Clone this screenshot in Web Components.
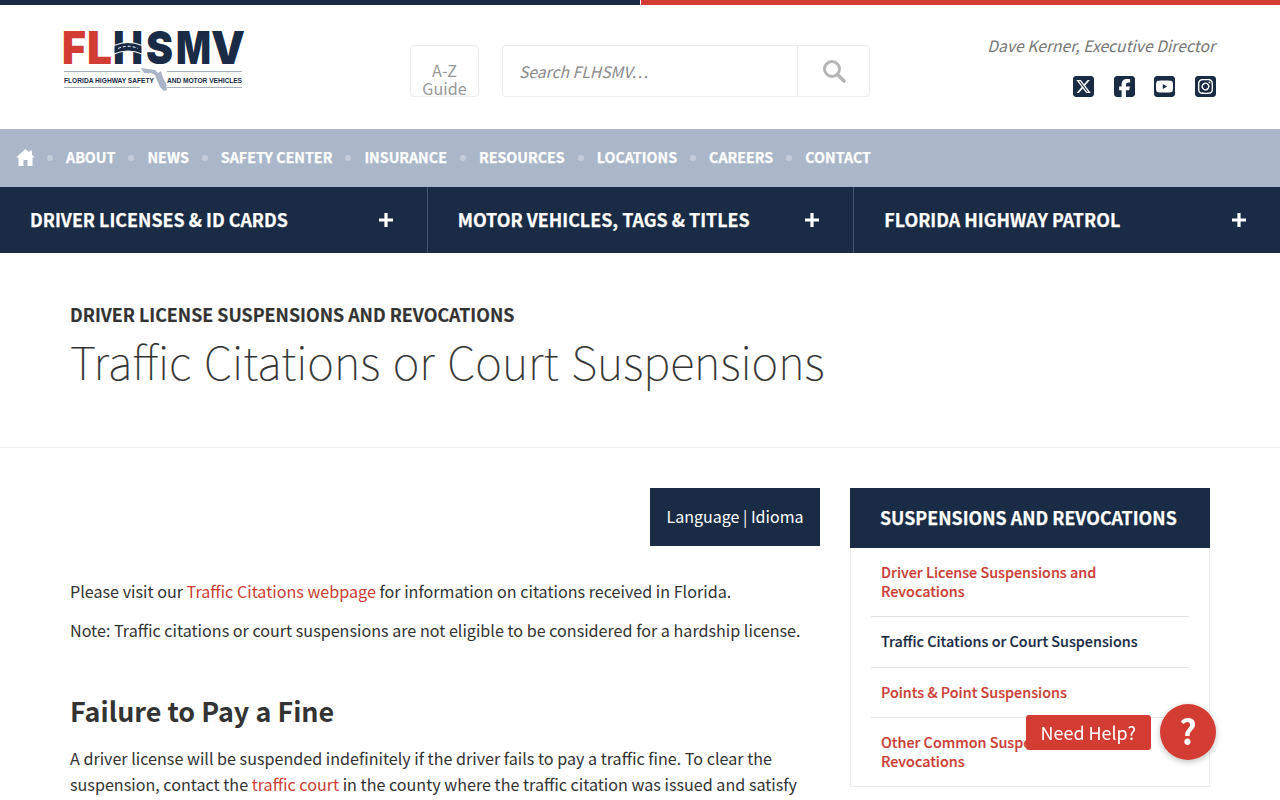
<!DOCTYPE html>
<html lang="en">
<head>
<meta charset="utf-8">
<title>Traffic Citations or Court Suspensions</title>
<style>
  html, body { margin: 0; padding: 0; background: #fff; }
  body { font-family: "Noto Sans CJK SC", "Open Sans", sans-serif; color: #333; overflow: hidden; height: 800px; }
</style>
</head>
<body>
<site-header></site-header>
<utility-nav></utility-nav>
<main-nav></main-nav>
<page-title kicker="Driver License Suspensions and Revocations">Traffic Citations or Court Suspensions</page-title>
<page-body>
  <article-content></article-content>
  <side-menu slot="side"></side-menu>
</page-body>
<help-button></help-button>

<script>
const fontStack = `"Noto Sans CJK SC", "Open Sans", sans-serif`

customElements.define('site-logo', class extends HTMLElement {
  connectedCallback() {
    const shadow = this.attachShadow({mode: 'open'})
    const letter = (t, x, w, fill) => `<text x="${x}" y="34" font-size="46" fill="${fill}" textLength="${w}" lengthAdjust="spacingAndGlyphs">${t}</text>`
    shadow.innerHTML = `
    <style>
      :host{ display: block; width: 182px; height: 64px; }
      svg{ display: block; overflow: visible; }
      text{ font-family: Inter, "Liberation Sans", sans-serif; font-weight: 900; }
      .sm{ font-family: "Liberation Sans", sans-serif; font-weight: 700; }
    </style>
    <svg width="182" height="64" viewBox="0 0 182 64">
      ${letter('F', -2, 24, '#d33c32')}
      ${letter('L', 23, 25, '#d33c32')}
      ${letter('H', 49, 30, '#1a2b45')}
      ${letter('S', 82, 27, '#1a2b45')}
      ${letter('M', 112, 35, '#1a2b45')}
      ${letter('V', 147, 34, '#1a2b45')}
      <path d="M50 15.500 Q64 9.500 78 15.500 V24 Q64 18 50 24 Z" fill="#1a2b45" stroke="#fff" stroke-width="1"/>
      <path d="M54 18.500 Q64 14 74 18.500" fill="none" stroke="#fff" stroke-width="1" stroke-dasharray="3 2"/>
      <rect x="0" y="41" width="76" height="1" fill="#a9b0bb"/>
      <rect x="103" y="41" width="75" height="1" fill="#a9b0bb"/>
      <rect x="0" y="57" width="76" height="1" fill="#a9b0bb"/>
      <rect x="103" y="57" width="75" height="1" fill="#a9b0bb"/>
      <path d="M77 38 L91 40 L94 43 L97 41 L99 48 L102 53 L103 60 L100 61 L96 57 L93 50 L91 45 L87 43 L80 43 Z" fill="#a9b4c6"/>
      <text class="sm" x="0" y="52.500" font-size="6.600" fill="#1a2b45" textLength="90" lengthAdjust="spacing">FLORIDA HIGHWAY SAFETY</text>
      <text class="sm" x="103" y="52.500" font-size="6.600" fill="#1a2b45" textLength="75" lengthAdjust="spacing">AND MOTOR VEHICLES</text>
    </svg>`
  }
})

customElements.define('social-links', class extends HTMLElement {
  connectedCallback() {
    const shadow = this.attachShadow({mode: 'open'})
    const icons = {
      X: 'M64 32C28.700 32 0 60.700 0 96V416c0 35.300 28.700 64 64 64H384c35.300 0 64-28.700 64-64V96c0-35.300-28.700-64-64-64H64zm297.100 84L257.300 234.600 379.400 396H283.800L209 298.100 123.300 396H75.800l111-126.900L69.700 116h98l67.700 89.500L313.600 116h47.500zM323.300 367.600L153.400 142.900H125.100L296.900 367.600h26.300z',
      Facebook: 'M64 32C28.700 32 0 60.700 0 96V416c0 35.300 28.700 64 64 64h98.200V334.200H109.400V256h52.800V222.300c0-87.100 39.400-127.400 125-127.400c16.200 0 44.200 3.200 55.700 6.400V172c-6-.6-16.500-1-29.600-1c-42 0-58.200 15.900-58.200 57.200V256h83.600l-14.400 78.200H255V480H384c35.300 0 64-28.700 64-64V96c0-35.300-28.700-64-64-64H64z',
      YouTube: 'M282 256.200l-95.200-54.100V310.300L282 256.200zM384 32H64C28.700 32 0 60.700 0 96V416c0 35.300 28.700 64 64 64H384c35.300 0 64-28.700 64-64V96c0-35.300-28.700-64-64-64zm14.400 136.100c7.600 28.600 7.600 88.200 7.600 88.200s0 59.600-7.600 88.100c-4.200 15.800-16.500 27.700-32.200 31.900C337.900 384 224 384 224 384s-113.900 0-142.200-7.600c-15.700-4.200-28-16.100-32.200-31.900C42 315.900 42 256.300 42 256.300s0-59.700 7.600-88.200c4.200-15.800 16.500-28.200 32.200-32.400C110.100 128 224 128 224 128s113.900 0 142.200 7.700c15.700 4.200 28 16.600 32.200 32.400z',
      Instagram: 'M194.400 211.700a53.300 53.300 0 1 0 59.300 88.700 53.300 53.300 0 1 0 -59.300-88.700zm142.300-68.400c-5.200-5.200-11.500-9.300-18.400-12c-18.100-7.100-57.600-6.800-83.100-6.500c-4.100 0-7.900 .1-11.200 .1c-3.300 0-7.200 0-11.400-.1c-25.500-.3-64.800-.7-82.900 6.500c-6.900 2.700-13.100 6.800-18.400 12s-9.300 11.500-12 18.400c-7.100 18.100-6.700 57.700-6.500 83.200c0 4.100 .1 7.900 .1 11.100s0 7-.1 11.100c-.2 25.500-.6 65.100 6.500 83.200c2.700 6.900 6.800 13.100 12 18.400s11.500 9.300 18.400 12c18.100 7.100 57.600 6.800 83.100 6.500c4.100 0 7.900-.1 11.200-.1c3.300 0 7.200 0 11.400 .1c25.500 .3 64.800 .7 82.900-6.500c6.900-2.700 13.100-6.800 18.400-12s9.300-11.500 12-18.400c7.200-18 6.800-57.400 6.500-83c0-4.200-.1-8.100-.1-11.400s0-7.100 .1-11.400c.3-25.500 .7-64.900-6.500-83l0 0c-2.700-6.900-6.800-13.100-12-18.400zm-67.100 44.500A82 82 0 1 1 178.400 324.200a82 82 0 1 1 91.100-136.400zm29.200-1.300c-3.100-2.100-5.600-5.100-7.100-8.600s-1.800-7.300-1.100-11.100s2.600-7.100 5.200-9.800s6.100-4.500 9.800-5.200s7.600-.4 11.100 1.100s6.500 3.900 8.600 7s3.200 6.800 3.200 10.600c0 2.500-.5 5-1.400 7.300s-2.400 4.400-4.100 6.200s-3.900 3.200-6.200 4.200s-4.800 1.500-7.300 1.500l0 0c-3.800 0-7.500-1.100-10.600-3.200zM448 96c0-35.300-28.700-64-64-64H64C28.700 32 0 60.700 0 96V416c0 35.300 28.700 64 64 64H384c35.300 0 64-28.700 64-64V96zM357 389c-18.700 18.700-41.400 24.600-67 25.900c-26.400 1.500-105.600 1.500-132 0c-25.600-1.300-48.300-7.200-67-25.900s-24.600-41.400-25.800-67c-1.500-26.400-1.500-105.600 0-132c1.300-25.600 7.100-48.300 25.800-67s41.500-24.600 67-25.800c26.400-1.500 105.600-1.500 132 0c25.600 1.300 48.300 7.200 67 25.800s24.600 41.400 25.800 67c1.500 26.300 1.500 105.400 0 131.900c-1.300 25.600-7.100 48.300-25.800 67z'
    }
    shadow.innerHTML = `
    <style>
      :host{ display: flex; gap: 19.670px; }
      a{ display: block; width: 21px; height: 21px; }
      svg{ display: block; width: 21px; height: 21px; fill: #1a2b45; }
    </style>
    ${Object.keys(icons).map(k => `<a href="#" aria-label="${k}"><svg viewBox="0 32 448 448"><path d="${icons[k]}"/></svg></a>`).join('')}`
  }
})

customElements.define('site-header', class extends HTMLElement {
  connectedCallback() {
    const shadow = this.attachShadow({mode: 'open'})
    shadow.innerHTML = `
    <style>
      :host{ display: block; height: 129px; font-family: ${fontStack}; }
      .bar{ height: 5px; background: linear-gradient(to right, #1a2b45 640px, #fff 640px, #fff 641px, #d33c32 641px); }
      .row{ display: flex; align-items: flex-start; padding: 25px 64px 0 64px; }
      site-logo{ flex: none; }
      .az{ flex: none; box-sizing: border-box; width: 69px; height: 52px; margin: 15px 0 0 164px; border: 1px solid #ececec; border-radius: 4px; color: #999; font-size: 16.140px; line-height: 18px; text-align: center; padding-top: 15px; overflow: hidden; text-decoration: none; }
      .search{ flex: none; display: flex; width: 368px; height: 52px; margin: 15px 0 0 23px; box-sizing: border-box; border: 1px solid #ececec; border-radius: 4px; }
      .field{ flex: 1; padding-left: 16px; font-size: 15.700px; font-style: italic; color: #8a8a8a; line-height: 52px; }
      .go{ flex: none; box-sizing: border-box; width: 72px; border-left: 1px solid #ececec; display: flex; align-items: center; justify-content: center; }
      .right{ margin-left: auto; display: flex; flex-direction: column; align-items: flex-end; }
      .dir{ font-size: 15.700px; font-style: italic; color: #777; line-height: 24px; margin-top: 4px; padding-right: 1px; }
      social-links{ margin-top: 18px; }
    </style>
    <div class="bar"></div>
    <div class="row">
      <site-logo></site-logo>
      <a class="az" href="#">A-Z<br>Guide</a>
      <div class="search">
        <div class="field">Search FLHSMV…</div>
        <div class="go"><svg width="24" height="24" viewBox="0 0 24 24"><circle cx="10" cy="10" r="7.500" fill="none" stroke="#b5b5b5" stroke-width="3"/><path d="M15.500 15.500L22 22" stroke="#b5b5b5" stroke-width="3.500" stroke-linecap="round"/></svg></div>
      </div>
      <div class="right">
        <div class="dir">Dave Kerner, Executive Director</div>
        <social-links></social-links>
      </div>
    </div>`
  }
})

customElements.define('utility-nav', class extends HTMLElement {
  connectedCallback() {
    const shadow = this.attachShadow({mode: 'open'})
    const items = ['About','News','Safety Center','Insurance','Resources','Locations','Careers','Contact']
    shadow.innerHTML = `
    <style>
      :host{ display: flex; align-items: center; height: 58px; padding-left: 16px; background: #aab7c9; font-family: ${fontStack}; }
      a{ color: #fff; font-weight: 700; font-size: 14.280px; text-transform: uppercase; text-decoration: none; line-height: 20px; padding-bottom: 2px; -webkit-text-stroke: .25px; }
      .home{ display: block; height: 17px; padding: 0; margin-bottom: 2px; }
      i{ width: 6px; height: 6px; border-radius: 50%; background: #c3ccd9; margin: 0 13px; flex: none; }
      i:first-of-type{ margin-left: 12px; }
    </style>
    <a class="home" href="#" aria-label="Home"><svg width="19" height="17" viewBox="0 0 19 17" style="display:block"><path fill="#fff" d="M9.500 0L13.500 3.500V1.500H16V5.700L19 8.500H16.500V17H11.500V11H7.500V17H2.500V8.500H0Z"/></svg></a>
    ${items.map(t => `<i></i><a href="#">${t}</a>`).join('')}`
  }
})

customElements.define('main-nav', class extends HTMLElement {
  connectedCallback() {
    const shadow = this.attachShadow({mode: 'open'})
    const items = ['Driver Licenses &amp; ID Cards','Motor Vehicles, Tags &amp; Titles','Florida Highway Patrol']
    shadow.innerHTML = `
    <style>
      :host{ display: grid; grid-template-columns: repeat(3, 1fr); height: 66px; background: #1a2b45; font-family: ${fontStack}; }
      a{ display: flex; align-items: center; justify-content: space-between; box-sizing: border-box; padding: 0 34px 0 30px; color: #fff; font-weight: 700; font-size: 17.860px; text-transform: uppercase; text-decoration: none; border-left: 1px solid #46556c; -webkit-text-stroke: .25px; }
      a:first-of-type{ border-left: 0; }
      span{ padding-bottom: 2px; }
      svg{ display: block; flex: none; }
    </style>
    ${items.map(t => `<a href="#"><span>${t}</span><svg width="14" height="14" viewBox="0 0 14 14"><path d="M7 0v14M0 7h14" stroke="#fff" stroke-width="3.200"/></svg></a>`).join('')}`
  }
})

customElements.define('page-title', class extends HTMLElement {
  connectedCallback() {
    const shadow = this.attachShadow({mode: 'open'})
    shadow.innerHTML = `
    <style>
      :host{ display: block; height: 195px; box-sizing: border-box; padding: 48px 70px 0; border-bottom: 1px solid #ececec; font-family: ${fontStack}; }
      .kicker{ font-size: 17.840px; font-weight: 700; line-height: 26px; text-transform: uppercase; color: #333; -webkit-text-stroke: .2px; }
      h1{ margin: 5px 0 0; font-size: 45.400px; word-spacing: 2.500px; font-weight: 100; line-height: 56px; color: #333; -webkit-text-stroke: .2px; }
    </style>
    <div class="kicker">${this.getAttribute('kicker')}</div>
    <h1><slot></slot></h1>`
  }
})

customElements.define('page-body', class extends HTMLElement {
  connectedCallback() {
    const shadow = this.attachShadow({mode: 'open'})
    shadow.innerHTML = `
    <style>
      :host{ display: grid; grid-template-columns: 750px 360px; gap: 30px; padding: 40px 70px 0; font-family: ${fontStack}; }
    </style>
    <slot></slot>
    <slot name="side"></slot>`
  }
})

customElements.define('article-content', class extends HTMLElement {
  connectedCallback() {
    const shadow = this.attachShadow({mode: 'open'})
    shadow.innerHTML = `
    <style>
      :host{ display: block; font-size: 16.140px; line-height: 26px; color: #333; }
      .lang{ display: flex; justify-content: flex-end; margin-bottom: 32px; padding-bottom: 1px; }
      .lang a{ display: block; box-sizing: border-box; width: 170px; height: 58px; line-height: 56px; text-align: center; background: #1a2b45; color: #fff; text-decoration: none; font-size: 16.020px; }
      p{ margin: 0 0 13px; }
      p:first-of-type{ margin-top: -1px; }
      a.r{ color: #cb3d35; text-decoration: none; }
      h2{ margin: 50px 0 16px; font-size: 26.900px; line-height: 36px; font-weight: 700; color: #333; }
    </style>
    <div class="lang"><a href="#">Language | Idioma</a></div>
    <p>Please visit our <a class="r" href="#">Traffic Citations webpage</a> for information on citations received in Florida.</p>
    <p>Note: Traffic citations or court suspensions are not eligible to be considered for a hardship license.</p>
    <h2>Failure to Pay a Fine</h2>
    <p>A driver license will be suspended indefinitely if the driver fails to pay a traffic fine. To clear the suspension, contact the <a class="r" href="#">traffic court</a> in the county where the traffic citation was issued and satisfy</p>`
  }
})

customElements.define('side-menu', class extends HTMLElement {
  connectedCallback() {
    const shadow = this.attachShadow({mode: 'open'})
    shadow.innerHTML = `
    <style>
      :host{ display: block; }
      h3{ margin: 0; height: 60px; padding-left: 30px; background: #1a2b45; color: #fff; font-size: 17.820px; font-weight: 700; line-height: 58px; text-transform: uppercase; -webkit-text-stroke: .25px; }
      ul{ list-style: none; margin: 0; padding: 0 20px; border: 1px solid #ececec; border-top: 0; }
      li{ border-bottom: 1px solid #e4e4e4; padding: 14px 10px 16px; font-size: 14.350px; line-height: 19.200px; font-weight: 500; -webkit-text-stroke: .15px; }
      li:last-child{ border-bottom: 0; }
      a{ color: #cb3d35; text-decoration: none; }
      a.cur{ color: #1a2b45; }
    </style>
    <h3>Suspensions and Revocations</h3>
    <ul>
      <li><a href="#">Driver License Suspensions and Revocations</a></li>
      <li><a class="cur" href="#">Traffic Citations or Court Suspensions</a></li>
      <li><a href="#">Points &amp; Point Suspensions</a></li>
      <li><a href="#">Other Common Suspensions and Revocations</a></li>
    </ul>`
  }
})

customElements.define('help-button', class extends HTMLElement {
  connectedCallback() {
    const shadow = this.attachShadow({mode: 'open'})
    shadow.innerHTML = `
    <style>
      :host{ position: fixed; right: 64px; top: 704px; display: flex; align-items: center; gap: 9px; font-family: ${fontStack}; }
      .label{ background: #d33c32; color: #fff; font-size: 17.940px; line-height: 35px; padding: 0 15px; border-radius: 3px; }
      .q{ width: 56px; height: 56px; border-radius: 50%; background: #d33c32; color: #fff; font-size: 34px; font-weight: 700; line-height: 54px; text-align: center; box-shadow: 0 2px 6px rgba(0,0,0,.25); }
    </style>
    <span class="label">Need Help?</span>
    <span class="q">?</span>`
  }
})
</script>
</body>
</html>
